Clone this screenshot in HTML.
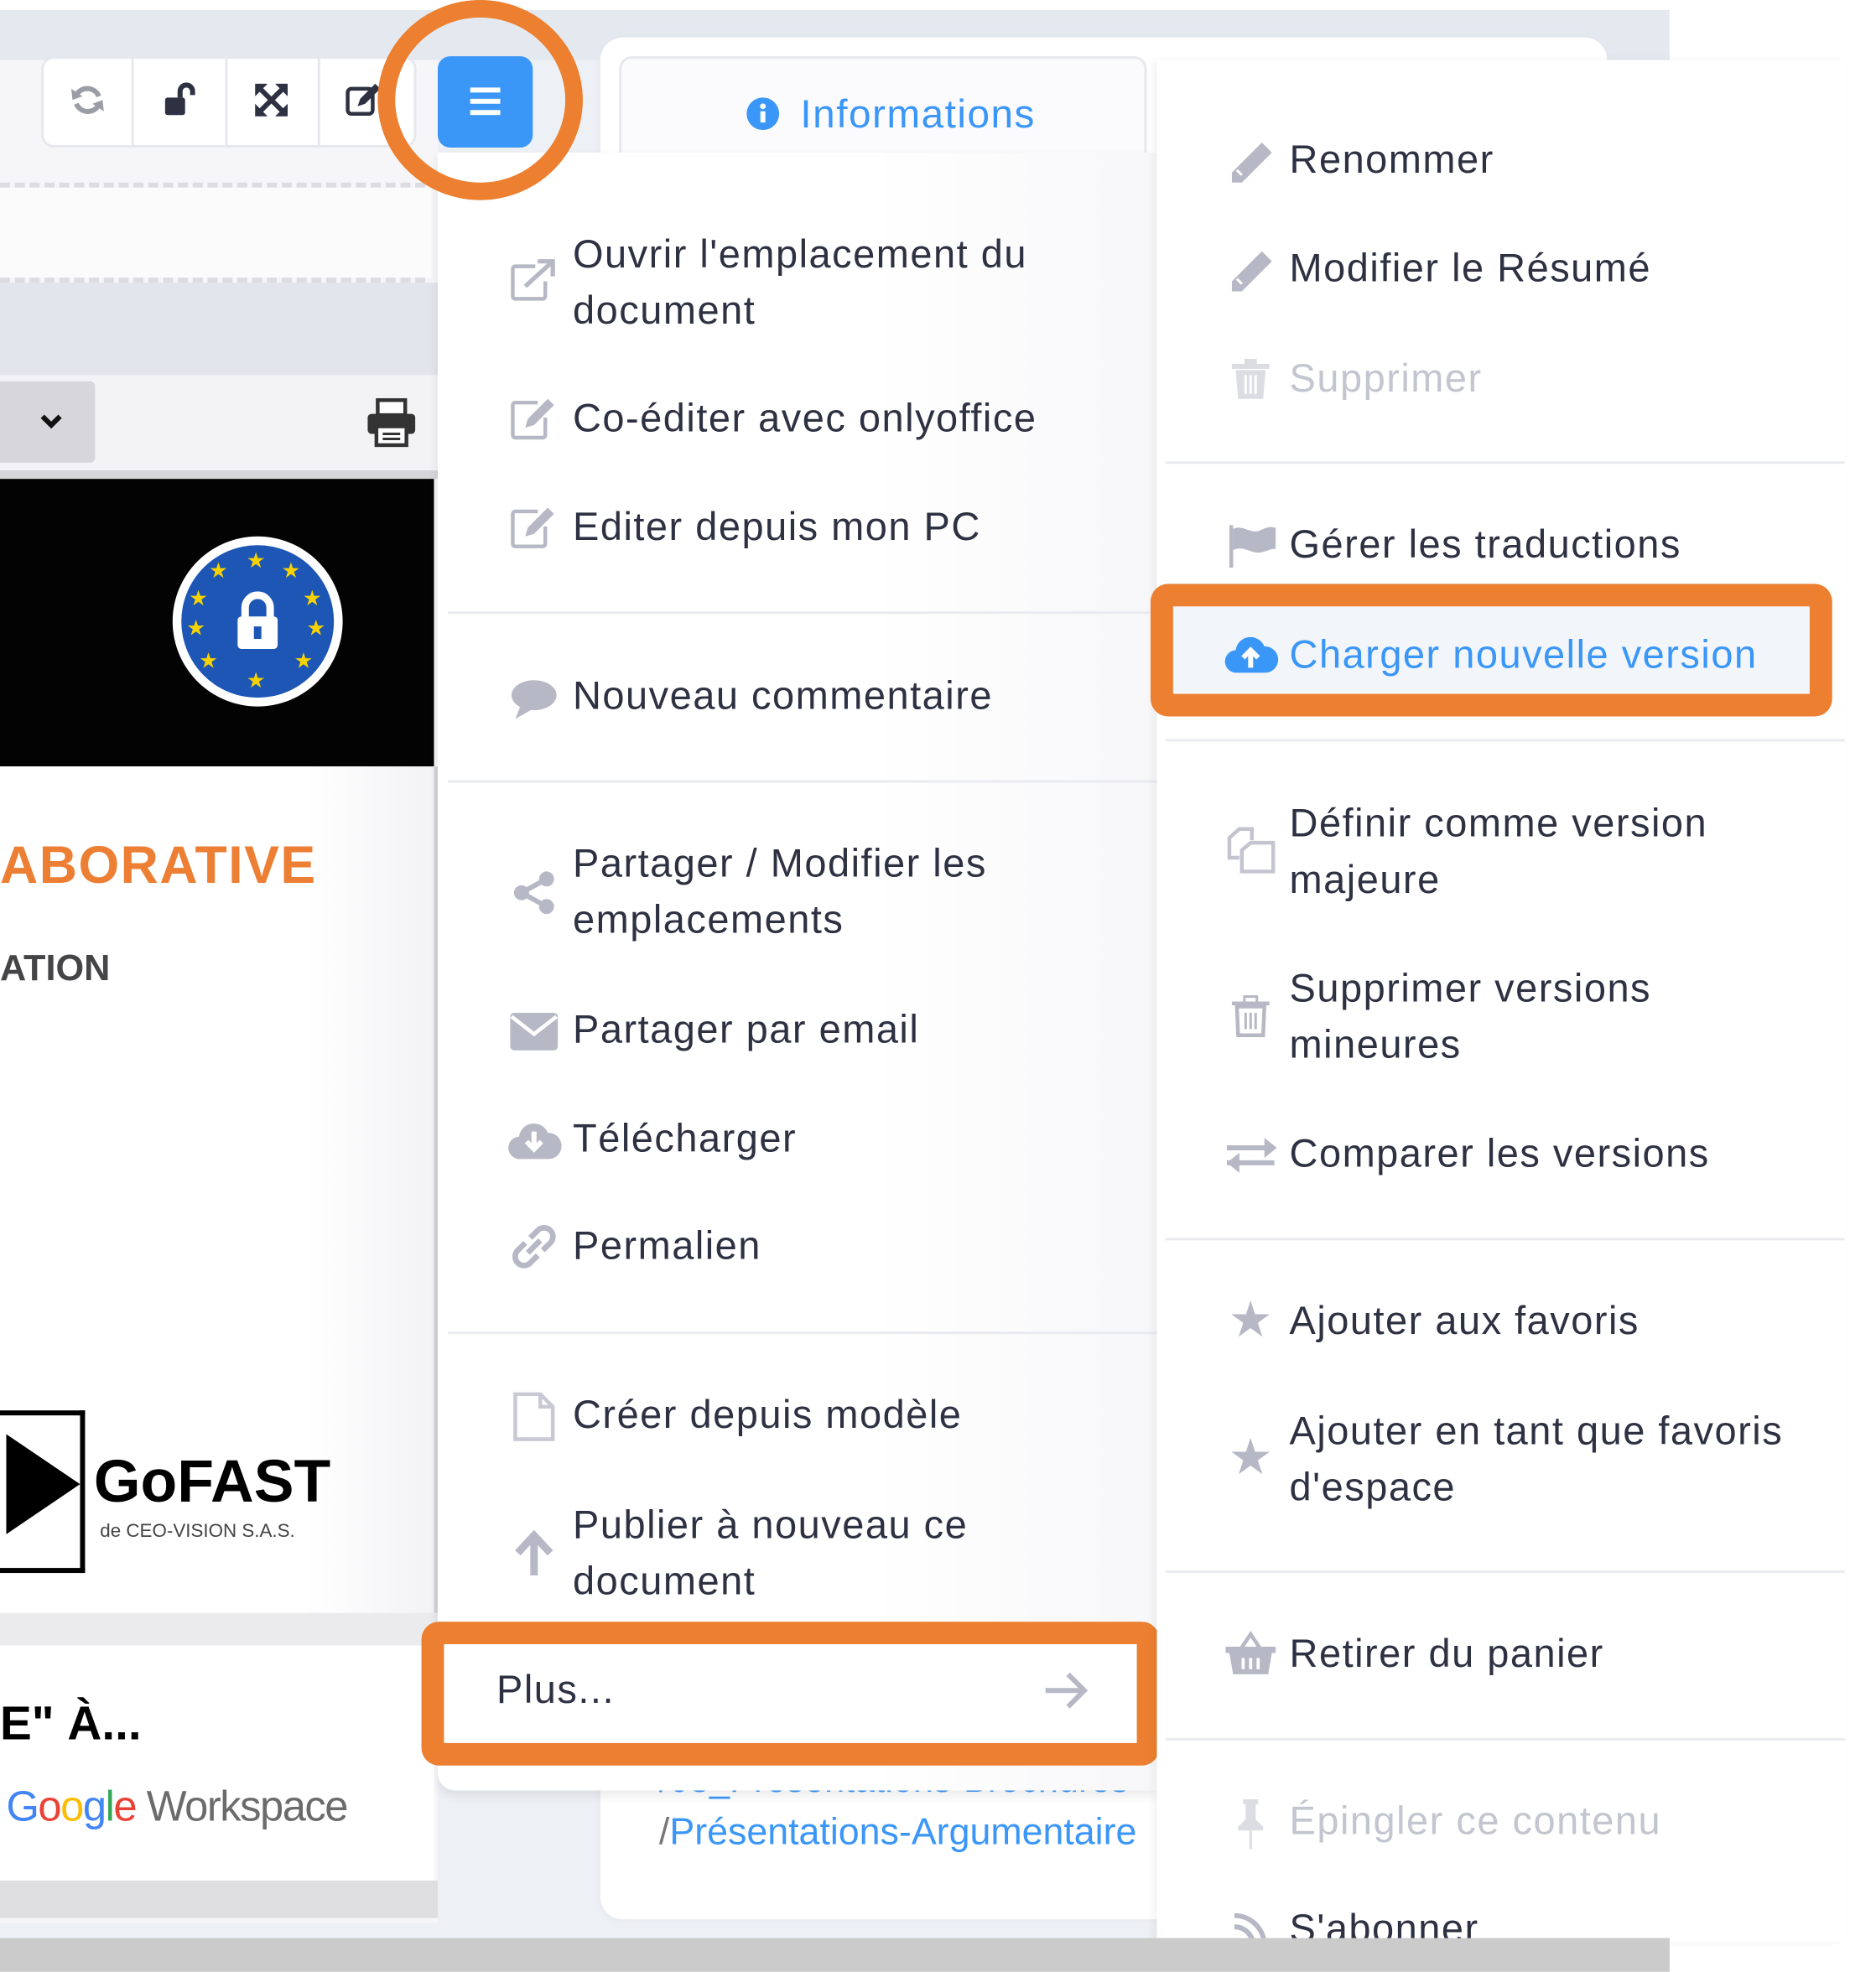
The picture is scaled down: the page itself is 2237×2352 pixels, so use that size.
<!DOCTYPE html>
<html><head><meta charset="utf-8"><style>
html,body{margin:0;padding:0;width:2237px;height:2351px;overflow:hidden;background:#fff}
#w{position:absolute;left:0;top:0;width:1500px;height:1577px;transform:scale(1.4913);transform-origin:0 0;font-family:"Liberation Sans",sans-serif;background:#fff}
.a{position:absolute}
.t{position:absolute;font-size:31.5px;line-height:45px;color:#2e3142;white-space:nowrap;letter-spacing:1px}
.g{color:#c3c5cf}
.sep{position:absolute;height:2px;background:#e9ebf0}
svg{position:absolute;overflow:visible}
</style></head><body><div id="w">
<div class="a" style="left:0;top:0;width:1335px;height:1550px;background:#edf0f5"></div>
<div class="a" style="left:0;top:0;width:1335px;height:8px;background:#fff"></div>
<div class="a" style="left:0;top:8px;width:1335px;height:40px;background:#e4e9f0"></div>
<div class="a" style="left:1335px;top:0;width:165px;height:1577px;background:#fff"></div>
<div class="a" style="left:0;top:48px;width:350px;height:1490px;background:#f6f6f8"></div>
<div class="a" style="left:33px;top:45px;width:300px;height:73px;background:#fff;border:2px solid #e6e8ee;border-radius:10px;box-sizing:border-box"></div>
<div class="a" style="left:105px;top:47px;width:2px;height:70px;background:#e6e8ee"></div>
<div class="a" style="left:180px;top:47px;width:2px;height:70px;background:#e6e8ee"></div>
<div class="a" style="left:254px;top:47px;width:2px;height:70px;background:#e6e8ee"></div>
<svg style="left:57px;top:67px" width="26" height="26" viewBox="0 0 26 26"><path d="M22 10A10 10 0 0 0 4 9M4 16a10 10 0 0 0 18 1" stroke="#9a9ca6" stroke-width="4" fill="none"/><path d="M0 4l1 9 8-3zM26 22l-1-9-8 3z" fill="#9a9ca6"/></svg>
<svg style="left:130px;top:66px" width="28" height="28" viewBox="0 0 28 28"><rect x="2" y="12" width="16" height="14" rx="2" fill="#2e3142"/><path d="M14 12V7a5 5 0 0 1 10 0v3" stroke="#2e3142" stroke-width="4" fill="none"/></svg>
<svg style="left:204px;top:67px" width="26" height="26" viewBox="0 0 26 26"><path d="M3 3l20 20M23 3L3 23" stroke="#2e3142" stroke-width="4"/><path d="M0 0h10L0 10zM26 0v10L16 0zM0 26V16l10 10zM26 26H16l10-10z" fill="#2e3142"/></svg>
<svg style="left:276px;top:67px" width="28" height="26" viewBox="0 0 28 26"><rect x="2" y="4" width="20" height="20" rx="3" stroke="#2e3142" stroke-width="3" fill="none"/><path d="M10 18l2-6 12-12 4 4-12 12z" fill="#2e3142"/></svg>
<div class="a" style="left:0;top:146px;width:340px;border-top:4px dashed #dcdde3"></div>
<div class="a" style="left:0;top:150px;width:345px;height:72px;background:#fbfbfc"></div>
<div class="a" style="left:0;top:222px;width:340px;border-top:4px dashed #dcdde3"></div>
<div class="a" style="left:0;top:226px;width:350px;height:74px;background:#e3e5ed"></div>
<div class="a" style="left:0;top:300px;width:350px;height:75px;background:#f3f3f5"></div>
<div class="a" style="left:0;top:305px;width:76px;height:65px;background:#d7d7db;border-radius:0 4px 4px 0"></div>
<svg style="left:32px;top:331px" width="18" height="12" viewBox="0 0 18 12"><path d="M2 2l7 7 7-7" stroke="#111" stroke-width="4" fill="none"/></svg>
<svg style="left:293px;top:318px" width="40" height="40" viewBox="0 0 40 40"><rect x="9" y="2" width="22" height="12" fill="#fff" stroke="#333" stroke-width="3"/><rect x="1" y="13" width="38" height="16" rx="3" fill="#333"/><rect x="8" y="23" width="24" height="15" fill="#fff" stroke="#333" stroke-width="3"/><path d="M13 29h14M13 33h14" stroke="#333" stroke-width="2"/></svg>
<div class="a" style="left:0;top:376px;width:350px;height:7px;background:#d6d6da"></div>
<div class="a" style="left:0;top:383px;width:347px;height:230px;background:#030303"></div>
<div class="a" style="left:138px;top:429px;width:136px;height:136px;border-radius:50%;background:#fff"></div>
<div class="a" style="left:145px;top:436px;width:122px;height:122px;border-radius:50%;background:#1d56b4"></div>
<div class="a" style="left:145px;top:432px;width:122px;height:130px;color:#f7d200;font-size:17px;line-height:17px">
<span class="a" style="left:52px;top:8px">★</span><span class="a" style="left:80px;top:16px">★</span><span class="a" style="left:97px;top:38px">★</span><span class="a" style="left:100px;top:62px">★</span><span class="a" style="left:90px;top:88px">★</span><span class="a" style="left:52px;top:104px">★</span><span class="a" style="left:22px;top:16px">★</span><span class="a" style="left:6px;top:38px">★</span><span class="a" style="left:4px;top:62px">★</span><span class="a" style="left:14px;top:88px">★</span></div>
<svg style="left:186px;top:474px" width="40" height="46" viewBox="0 0 40 46"><path d="M10 20V12a10 10 0 0 1 20 0v8" stroke="#fff" stroke-width="6" fill="none"/><rect x="4" y="19" width="32" height="26" rx="3" fill="#fff"/><rect x="17" y="27" width="6" height="10" fill="#1d56b4"/></svg>
<div class="a" style="left:0;top:613px;width:347px;height:677px;background:linear-gradient(90deg,#fff 70%,#f3f3f6)"></div>
<div class="a" style="left:347px;top:613px;width:3px;height:680px;background:#d4d4d8"></div>
<div class="a" style="left:0;top:667px;font:bold 42px/50px 'Liberation Sans',sans-serif;color:#ec7f33;letter-spacing:1px">ABORATIVE</div>
<div class="a" style="left:0;top:757px;font:bold 29px/36px 'Liberation Sans',sans-serif;color:#454548">ATION</div>
<div class="a" style="left:0;top:1128px;width:64px;height:122px;border:4px solid #000;border-left:0"></div>
<svg style="left:0;top:1147px" width="64" height="80" viewBox="0 0 64 80"><path d="M5 0L64 40 5 80z" fill="#000"/></svg>
<div class="a" style="left:75px;top:1158px;font:bold 48px/56px 'Liberation Sans',sans-serif;color:#000">GoFAST</div>
<div class="a" style="left:80px;top:1215px;font:15px/20px 'Liberation Sans',sans-serif;color:#444">de CEO-VISION S.A.S.</div>
<div class="a" style="left:0;top:1290px;width:350px;height:26px;background:#ebebed"></div>
<div class="a" style="left:0;top:1316px;width:347px;height:188px;background:#fff"></div>
<div class="a" style="left:0;top:1356px;font:bold 38px/46px 'Liberation Sans',sans-serif;color:#000">E" À...</div>
<div class="a" style="left:5px;top:1424px;font:34px/42px 'Liberation Sans',sans-serif;letter-spacing:-1px"><span style="color:#4285f4">G</span><span style="color:#ea4335">o</span><span style="color:#fbbc05">o</span><span style="color:#4285f4">g</span><span style="color:#34a853">l</span><span style="color:#ea4335">e</span> <span style="color:#6b6b6b">Workspace</span></div>
<div class="a" style="left:0;top:1504px;width:350px;height:30px;background:#dedee1"></div>
<div class="a" style="left:480px;top:30px;width:805px;height:1505px;background:#fff;border-radius:18px;box-shadow:0 0 6px #e2e5ec"></div>
<div class="a" style="left:495px;top:45px;width:422px;height:90px;border:2px solid #e6e8ee;border-radius:10px 10px 0 0;background:#fbfbfd;box-sizing:border-box"></div>
<svg style="left:597px;top:78px" width="26" height="26" viewBox="0 0 26 26"><circle cx="13" cy="13" r="13" fill="#3a96f7"/><rect x="11" y="11" width="4" height="9" fill="#fff"/><circle cx="13" cy="7" r="2.3" fill="#fff"/></svg>
<div class="t" style="left:640px;top:69px;color:#3a96f7;font-size:32px">Informations</div>
<div class="a" style="left:527px;top:1404px;font:29px/40px 'Liberation Sans',sans-serif;color:#3a96f7">/03_Présentations-Brochures</div>
<div class="a" style="left:527px;top:1446px;font:30px/40px 'Liberation Sans',sans-serif;color:#3a96f7;white-space:nowrap"><span style="color:#777">/</span>Présentations-Argumentaire</div>
<div class="a" style="left:350px;top:45px;width:76px;height:73px;background:#3a96f7;border-radius:10px"></div>
<div class="a" style="left:376px;top:70px;width:24px;height:4px;background:#fff;box-shadow:0 9px 0 #fff,0 18px 0 #fff"></div>
<div class="a" style="left:350px;top:122px;width:575px;height:1310px;background:linear-gradient(90deg,#fff 60%,#f7f7fa);border-radius:0 0 0 14px;box-shadow:0 4px 8px rgba(0,0,0,.08)"></div>
<div class="a" style="left:302px;top:0px;width:164px;height:160px;border:14px solid #ec7f30;border-radius:50%;box-sizing:border-box"></div>
<svg style="left:408px;top:207px" width="38" height="34" viewBox="0 0 38 34"><path d="M20 6H4a2 2 0 0 0-2 2v22a2 2 0 0 0 2 2h22a2 2 0 0 0 2-2V18" stroke="#b7b8c6" stroke-width="3" fill="none"/><path d="M12 22L34 2M22 2h12v12" stroke="#b7b8c6" stroke-width="3.5" fill="none"/></svg>
<div class="t" style="left:458px;top:181px">Ouvrir l'emplacement du<br>document</div>
<svg style="left:408px;top:318px" width="38" height="34" viewBox="0 0 38 34"><path d="M22 4H4a2 2 0 0 0-2 2v24a2 2 0 0 0 2 2h22a2 2 0 0 0 2-2V16" stroke="#b7b8c6" stroke-width="3" fill="none"/><path d="M12 24l2-7L30 1l5 5-16 16z" fill="#b7b8c6"/></svg>
<div class="t" style="left:458px;top:312px">Co-éditer avec onlyoffice</div>
<svg style="left:408px;top:405px" width="38" height="34" viewBox="0 0 38 34"><path d="M22 4H4a2 2 0 0 0-2 2v24a2 2 0 0 0 2 2h22a2 2 0 0 0 2-2V16" stroke="#b7b8c6" stroke-width="3" fill="none"/><path d="M12 24l2-7L30 1l5 5-16 16z" fill="#b7b8c6"/></svg>
<div class="t" style="left:458px;top:399px">Editer depuis mon PC</div>
<div class="sep" style="left:358px;top:489px;width:567px"></div>
<svg style="left:408px;top:543px" width="38" height="32" viewBox="0 0 38 32"><ellipse cx="19" cy="13" rx="18" ry="12" fill="#b7b8c6"/><path d="M4 32l4-10 10 2z" fill="#b7b8c6"/></svg>
<div class="t" style="left:458px;top:534px">Nouveau commentaire</div>
<div class="sep" style="left:358px;top:624px;width:567px"></div>
<svg style="left:410px;top:697px" width="34" height="34" viewBox="0 0 34 34"><circle cx="27" cy="6" r="6" fill="#b7b8c6"/><circle cx="27" cy="28" r="6" fill="#b7b8c6"/><circle cx="7" cy="17" r="6" fill="#b7b8c6"/><path d="M27 6L7 17l20 11" stroke="#b7b8c6" stroke-width="4" fill="none"/></svg>
<div class="t" style="left:458px;top:668px">Partager / Modifier les<br>emplacements</div>
<svg style="left:408px;top:810px" width="38" height="30" viewBox="0 0 38 30"><rect x="0" y="0" width="38" height="30" rx="3" fill="#b7b8c6"/><path d="M1 3l18 14L37 3" stroke="#fff" stroke-width="3" fill="none"/></svg>
<div class="t" style="left:458px;top:801px">Partager par email</div>
<svg style="left:406px;top:893px" width="42" height="34" viewBox="0 0 42 34"><path d="M10 34a9 9 0 0 1-1-18 12 12 0 0 1 23-3 10 10 0 0 1 1 21z" fill="#b7b8c6"/><path d="M21 12v14M15 20l6 6 6-6" stroke="#fff" stroke-width="4" fill="none"/></svg>
<div class="t" style="left:458px;top:888px">Télécharger</div>
<svg style="left:408px;top:978px" width="38" height="38" viewBox="0 0 38 38"><path d="M16 12l6-6a7 7 0 0 1 10 10l-6 6M22 26l-6 6A7 7 0 0 1 6 22l6-6M14 24l10-10" stroke="#b7b8c6" stroke-width="4.5" fill="none"/></svg>
<div class="t" style="left:458px;top:974px">Permalien</div>
<div class="sep" style="left:358px;top:1065px;width:567px"></div>
<svg style="left:410px;top:1113px" width="34" height="40" viewBox="0 0 34 40"><path d="M2 2h20l10 10v26H2z" stroke="#c8c9d4" stroke-width="3" fill="none"/><path d="M22 2v10h10" stroke="#c8c9d4" stroke-width="3" fill="none"/></svg>
<div class="t" style="left:458px;top:1109px">Créer depuis modèle</div>
<svg style="left:410px;top:1224px" width="34" height="36" viewBox="0 0 34 36"><path d="M17 36V6M4 18L17 4l13 14" stroke="#b7b8c6" stroke-width="6" fill="none"/></svg>
<div class="t" style="left:458px;top:1197px">Publier à nouveau ce<br>document</div>
<div class="a" style="left:337px;top:1297px;width:590px;height:115px;border:18px solid #ec7f30;border-radius:14px;box-sizing:border-box;background:#fff"></div>
<div class="t" style="left:397px;top:1329px">Plus...</div>
<svg style="left:834px;top:1336px" width="36" height="32" viewBox="0 0 36 32"><path d="M2 16h30M20 3l13 13-13 13" stroke="#b7b8c6" stroke-width="4" fill="none"/></svg>
<div class="a" style="left:925px;top:48px;width:550px;height:1505px;background:#fff;box-shadow:-3px 0 6px rgba(0,0,0,.05)"></div>
<svg style="left:983px;top:112px" width="36" height="34" viewBox="0 0 36 34"><path d="M2 26L26 2l8 8-24 24H2z" fill="#b7b8c6"/><path d="M6 24l4 4" stroke="#fff" stroke-width="2"/></svg>
<div class="t" style="left:1031px;top:105px">Renommer</div>
<svg style="left:983px;top:199px" width="36" height="34" viewBox="0 0 36 34"><path d="M2 26L26 2l8 8-24 24H2z" fill="#b7b8c6"/><path d="M6 24l4 4" stroke="#fff" stroke-width="2"/></svg>
<div class="t" style="left:1031px;top:192px">Modifier le Résumé</div>
<svg style="left:985px;top:287px" width="30" height="32" viewBox="0 0 30 32"><rect x="0" y="4" width="30" height="4" fill="#dcdde3"/><rect x="10" y="0" width="10" height="5" fill="#dcdde3"/><path d="M3 9h24l-2 23H5z" fill="#dcdde3"/><path d="M11 13v15M15 13v15M19 13v15" stroke="#fff" stroke-width="2"/></svg>
<div class="t g" style="left:1031px;top:280px">Supprimer</div>
<div class="sep" style="left:932px;top:369px;width:543px"></div>
<svg style="left:983px;top:420px" width="38" height="34" viewBox="0 0 38 34"><rect x="0" y="0" width="3" height="34" fill="#b7b8c6"/><path d="M3 3c8-4 14 5 22 1s10-2 12-2v17c-6 0-8 3-14 3S10 16 3 20z" fill="#b7b8c6"/></svg>
<div class="t" style="left:1031px;top:413px">Gérer les traductions</div>
<div class="sep" style="left:932px;top:591px;width:543px"></div>
<div class="a" style="left:920px;top:467px;width:545px;height:106px;border:18px solid #ec7f30;border-radius:14px;box-sizing:border-box;background:#f2f5f9"></div>
<svg style="left:980px;top:508px" width="40" height="30" viewBox="0 0 40 30"><path d="M9 30a9 9 0 0 1-1-18A12 12 0 0 1 31 9a10 10 0 0 1 1 21z" fill="#3a96f7"/><path d="M20 26V13M14 18l6-6 6 6" stroke="#fff" stroke-width="4" fill="none"/></svg>
<div class="t" style="left:1031px;top:501px;color:#3a96f7">Charger nouvelle version</div>
<svg style="left:981px;top:662px" width="40" height="36" viewBox="0 0 40 36"><path d="M10 24H2V8l8-7h10v9" stroke="#c3c4d0" stroke-width="3" fill="none"/><path d="M12 35V18l7-6h18v23z" stroke="#c3c4d0" stroke-width="3" fill="none"/></svg>
<div class="t" style="left:1031px;top:636px">Définir comme version<br>majeure</div>
<svg style="left:985px;top:796px" width="30" height="34" viewBox="0 0 30 34"><rect x="0" y="5" width="30" height="3" fill="#b7b8c6"/><rect x="10" y="1" width="10" height="5" stroke="#b7b8c6" stroke-width="2" fill="none"/><path d="M4 9h22l-1 23H5z" stroke="#b7b8c6" stroke-width="3" fill="none"/><path d="M11 14v13M15 14v13M19 14v13" stroke="#b7b8c6" stroke-width="2"/></svg>
<div class="t" style="left:1031px;top:768px">Supprimer versions<br>mineures</div>
<svg style="left:981px;top:910px" width="40" height="28" viewBox="0 0 40 28"><path d="M0 8h32M0 20h38" stroke="#b7b8c6" stroke-width="4"/><path d="M30 0l10 8-10 8zM10 12L0 20l10 8z" fill="#b7b8c6"/></svg>
<div class="t" style="left:1031px;top:900px">Comparer les versions</div>
<div class="sep" style="left:932px;top:990px;width:543px"></div>
<div class="t" style="left:982px;top:1034px;color:#b7b8c6;font-size:40px">★</div>
<div class="t" style="left:1031px;top:1034px">Ajouter aux favoris</div>
<div class="t" style="left:982px;top:1144px;color:#b7b8c6;font-size:40px">★</div>
<div class="t" style="left:1031px;top:1122px">Ajouter en tant que favoris<br>d'espace</div>
<div class="sep" style="left:932px;top:1256px;width:543px"></div>
<svg style="left:980px;top:1305px" width="40" height="34" viewBox="0 0 40 34"><path d="M12 14L20 2l8 12" stroke="#b7b8c6" stroke-width="3" fill="none"/><path d="M0 12h40v5H0zM3 17h34l-3 17H6z" fill="#b7b8c6"/><path d="M14 21v9M20 21v9M26 21v9" stroke="#fff" stroke-width="2.5"/></svg>
<div class="t" style="left:1031px;top:1300px">Retirer du panier</div>
<div class="sep" style="left:932px;top:1390px;width:543px"></div>
<svg style="left:988px;top:1439px" width="24" height="40" viewBox="0 0 24 40"><path d="M6 0h12v4h-2v12l6 6v3H2v-3l6-6V4H6z" fill="#dcdde3"/><rect x="11" y="25" width="2" height="15" fill="#dcdde3"/></svg>
<div class="t g" style="left:1031px;top:1434px">Épingler ce contenu</div>
<svg style="left:985px;top:1528px" width="30" height="30" viewBox="0 0 30 30"><path d="M2 4a24 24 0 0 1 24 24M2 13a15 15 0 0 1 15 15" stroke="#b7b8c6" stroke-width="4" fill="none"/></svg>
<div class="t" style="left:1031px;top:1520px">S'abonner</div>
<div class="a" style="left:0;top:1550px;width:1335px;height:27px;background:#cbcbcb"></div>
</div></body></html>
